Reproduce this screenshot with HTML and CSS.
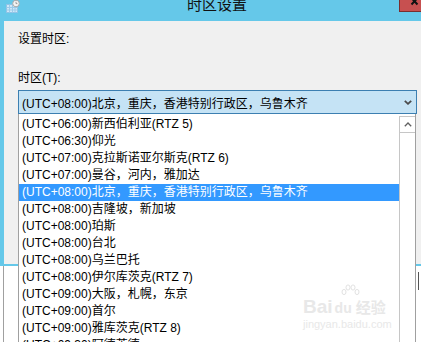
FILE: index.html
```html
<!DOCTYPE html>
<html lang="zh-CN">
<head>
  <meta charset="UTF-8">
  <title>时区设置</title>
  <link rel="stylesheet" href="styles.css">
</head>
<body>
  <div class="window">
    <div class="titlebar">
      <svg class="app-icon" viewBox="0 0 14 13">
        <rect x="0.5" y="4.5" width="11" height="8" fill="#cfe8f8" stroke="#8fc3e6"/>
        <path d="M0.5 7.5H11.5M0.5 10H11.5M3.5 4.5V12.5M6.5 4.5V12.5M9 4.5V12.5" stroke="#9ccbea" stroke-width="1"/>
        <circle cx="10" cy="3.5" r="3.3" fill="#f4f4f4" stroke="#a8a8a8"/>
        <path d="M10 1.8V3.6H11.4" stroke="#888" fill="none" stroke-width="0.8"/>
      </svg>
      <span class="title">时区设置</span>
      <span class="close">
        <svg viewBox="0 0 22 12" width="22" height="12">
          <path d="M12.5 -2L18.5 4.5M18.5 -2L12.5 4.5" stroke="#111" stroke-width="2"/>
        </svg>
      </span>
    </div>
    <div class="client">
      <div class="label first">设置时区:</div>
      <div class="label">时区(T):</div>
      <div class="combo">
        <span class="combo-text">(UTC+08:00)北京，重庆，香港特别行政区，乌鲁木齐</span>
        <svg class="combo-arrow" viewBox="0 0 8 5">
          <path d="M0.8 0.8L4 3.8L7.2 0.8" stroke="#4a4a4a" stroke-width="1.8" fill="none"/>
        </svg>
        <div class="dropdown">
          <ul class="options">
            <li>(UTC+06:00)新西伯利亚(RTZ 5)</li>
            <li>(UTC+06:30)仰光</li>
            <li>(UTC+07:00)克拉斯诺亚尔斯克(RTZ 6)</li>
            <li>(UTC+07:00)曼谷，河内，雅加达</li>
            <li class="selected">(UTC+08:00)北京，重庆，香港特别行政区，乌鲁木齐</li>
            <li>(UTC+08:00)吉隆坡，新加坡</li>
            <li>(UTC+08:00)珀斯</li>
            <li>(UTC+08:00)台北</li>
            <li>(UTC+08:00)乌兰巴托</li>
            <li>(UTC+08:00)伊尔库茨克(RTZ 7)</li>
            <li>(UTC+09:00)大阪，札幌，东京</li>
            <li>(UTC+09:00)首尔</li>
            <li>(UTC+09:00)雅库茨克(RTZ 8)</li>
            <li>(UTC+09:30)阿德莱德</li>
          </ul>
          <div class="scrollbar">
            <div class="scroll-up">
              <svg viewBox="0 0 8 5" width="8" height="5">
                <path d="M0.8 4.2L4 1L7.2 4.2" stroke="#606060" stroke-width="1.3" fill="none"/>
              </svg>
            </div>
          </div>
        </div>
      </div>
    </div>
  </div>
  <div class="below">
    <div class="edge"></div>
  </div>

  <!-- watermark -->
  <div class="watermark">
    <svg class="wm-paw" viewBox="0 0 20 14" width="20" height="14">
      <ellipse cx="4" cy="8" rx="2" ry="2.6" fill="none" stroke="#e2e2e2"/>
      <ellipse cx="8" cy="3.5" rx="2" ry="2.6" fill="none" stroke="#e2e2e2"/>
      <ellipse cx="13" cy="3.5" rx="2" ry="2.6" fill="none" stroke="#e2e2e2"/>
      <ellipse cx="17" cy="8" rx="2" ry="2.6" fill="none" stroke="#e2e2e2"/>
    </svg>
    <div class="wm-logo"><span class="wm-bai">Bai</span><span class="wm-du">du</span><span class="wm-jy">经验</span></div>
    <div class="wm-url">jingyan.baidu.com</div>
  </div>
</body>
</html>
```

FILE: styles.css
```css
* {
  box-sizing: border-box;
}

body {
  margin: 0;
  width: 421px;
  height: 342px;
  overflow: hidden;
  position: relative;
  background: #fff;
  font-family: "Liberation Sans", "Noto Sans CJK SC", sans-serif;
  font-size: 12px;
  color: #000;
}

/* Window frame */
.window {
  background: #65c8e9;
  padding: 0 0 2px 4px;
}

.titlebar {
  height: 21px;
  display: flex;
  align-items: flex-start;
}

.app-icon {
  margin-left: 2px;
  width: 14px;
  height: 13px;
}

.title {
  margin-left: 167px;
  margin-top: -3px;
  font-size: 15px;
  line-height: 15px;
  color: #111;
}

.close {
  margin-left: auto;
  width: 22px;
  height: 12px;
  background: #c75050;
  border-left: 1px solid #7a2e2e;
  border-bottom: 1px solid #7a2e2e;
  display: flex;
}

.close svg {
  margin-left: -1px;
}

/* Client area */
.client {
  background: #f0f0f0;
  height: 243px;
  padding: 10px 0 0 14px;
}

.label {
  line-height: 16px;
}

.label.first {
  margin-bottom: 23px;
}

/* Combo box */
.combo {
  position: relative;
  margin-top: 4px;
  width: 399px;
  height: 24px;
  border: 1px solid #3c7fb1;
  background: #c5e3f5;
  display: flex;
  align-items: center;
  padding-left: 3px;
}

.combo-text {
  white-space: nowrap;
}

.combo-arrow {
  margin-left: auto;
  margin-right: 4px;
  width: 8px;
  height: 5px;
}

.dropdown {
  position: absolute;
  left: -1px;
  top: 23px;
  width: 398px;
  height: 240px;
  background: #fff;
  border-left: 1px solid #a0a0a0;
  border-right: 1px solid #a0a0a0;
  padding-top: 2px;
  display: flex;
}

.options {
  flex: 1;
  list-style: none;
  margin: 0;
  padding: 0;
}

.options li {
  height: 17px;
  line-height: 17px;
  padding-left: 3px;
  white-space: nowrap;
}

.options li.selected {
  background: #3399ff;
  color: #fff;
}

.scrollbar {
  width: 16px;
  border-left: 1px solid #c6c6c6;
  border-top: 1px solid #c6c6c6;
}

.scroll-up {
  height: 16px;
  border-bottom: 1px solid #c6c6c6;
  display: flex;
  justify-content: center;
  align-items: center;
}

/* Window behind */
.below {
  height: 76px;
  margin-left: 3px;
  border-left: 1px solid #a0a0a0;
  display: flex;
  padding-top: 6px;
}

.edge {
  margin-left: auto;
  margin-right: 2px;
  width: 1px;
  height: 18px;
  background: #555;
}

/* Watermark over the list */
.watermark {
  position: absolute;
  left: 303px;
  top: 284px;
  color: #e8e8e8;
  font-weight: bold;
}

.wm-paw {
  display: block;
  margin-left: 37px;
}

.wm-logo {
  display: flex;
  align-items: baseline;
  line-height: 18px;
}

.wm-bai {
  font-size: 19px;
}

.wm-du {
  font-size: 14px;
  margin-left: 2px;
}

.wm-jy {
  font-size: 15px;
  margin-left: 4px;
}

.wm-url {
  font-size: 11px;
  line-height: 14px;
  font-weight: normal;
}
```
